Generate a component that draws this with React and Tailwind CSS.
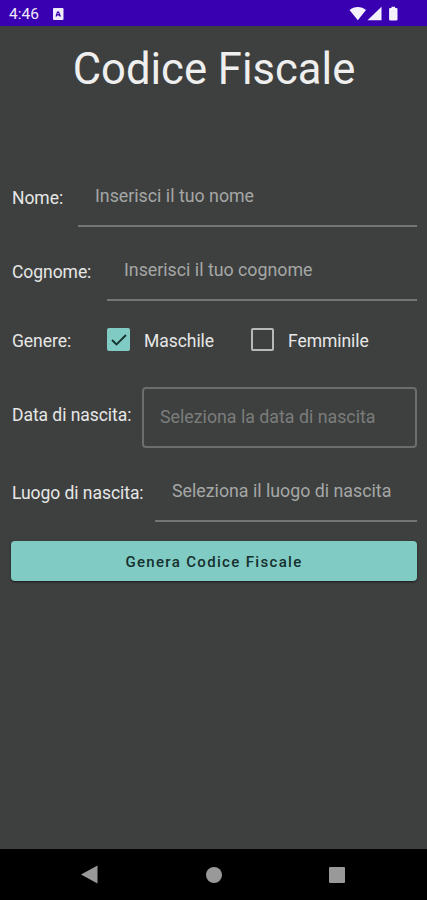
function StatusBar() {
  return (
    <header className="flex h-[26px] items-center bg-[#3900b1] pb-px pl-[9px] pr-[28px] text-[#f0ebfc]">
      <span className="w-[44px] pt-[2px] text-[15.500px] leading-[24px]">4:46</span>
      <svg className="mt-[2px] h-[12px] w-[11px]" viewBox="0 0 11 12">
        <rect width="10.500" height="12" rx="1" fill="#efeafc" />
        <path d="M2.500 8.500 4 3.500h2L8 8.500H6.600L5 7 3.700 8.500Z" fill="#3900b1" />
        <circle cx="5" cy="5.600" r="0.700" fill="#efeafc" />
      </svg>
      <svg className="ml-auto mt-px h-[16px] w-[50px]" viewBox="0 0 50 16" fill="#f5f2fd">
        <path d="M.5 5C5.100.900 12.400.900 17 5L8.800 15.200Z" />
        <path d="M32.500 1.700v13.500H18.500Z" />
        <path d="M41.300 3h1.200V1.700h3.600V3h1.200q1.200 0 1.200 1v10.400q0 1-1.200 1h-6q-1.200 0-1.200-1V4q0-1 1.200-1Z" />
      </svg>
    </header>
  );
}

function Label({ children, className = "" }) {
  return (
    <span
      className={`shrink-0 whitespace-nowrap pl-px text-[17.500px] tracking-[-0.050px] text-[#e6e7e6] ${className}`}
    >
      {children}
    </span>
  );
}

function UnderlinedField({ label, placeholder, labelWidth }) {
  return (
    <div className="flex h-[61px] items-stretch">
      <Label className={`pt-[22px] ${labelWidth}`}>{label}</Label>
      <div className="flex-1 whitespace-nowrap border-b-2 border-[#747675] pl-[17px] pt-[19px] text-[#a5a7a6]">
        {placeholder}
      </div>
    </div>
  );
}

export default function App() {
  return (
    <div className="flex h-[900px] w-[427px] flex-col overflow-hidden bg-[#3e403f] font-['Roboto','Liberation_Sans',sans-serif]">
      <StatusBar />
      <main className="flex flex-1 flex-col pl-[11px] pr-[10px] text-[17.800px] leading-[21px]">
        <h1 className="mt-[17px] text-center text-[43.600px] leading-[54px] text-[#eeefee]">Codice Fiscale</h1>
        <div className="mt-[69px]">
          <UnderlinedField label="Nome:" placeholder="Inserisci il tuo nome" labelWidth="w-[67px]" />
        </div>
        <div className="mt-[13px]">
          <UnderlinedField label="Cognome:" placeholder="Inserisci il tuo cognome" labelWidth="w-[96px]" />
        </div>
        <div className="mt-[14px] flex h-[50px] items-center">
          <Label className="w-[96px] pt-[2px]">Genere:</Label>
          <span className="mb-px flex h-[23px] w-[23px] items-center justify-center rounded-[2px] bg-[#80cbc4]">
            <svg className="h-[22px] w-[22px]" viewBox="0 0 22 22" fill="none" stroke="#173632" strokeWidth="1.900">
              <path d="m4 11 4.500 4.500L18 6" />
            </svg>
          </span>
          <Label className="ml-[13px] w-[108px] pt-[2px]">Maschile</Label>
          <span className="mb-px h-[23px] w-[23px] rounded-[2px] border-2 border-[#b7b9b8]" />
          <Label className="ml-[13px] pt-[2px]">Femminile</Label>
        </div>
        <div className="mt-[22px] flex h-[61px]">
          <Label className="w-[131px] pt-[18px]">Data di nascita:</Label>
          <div className="flex-1 whitespace-nowrap rounded-[4px] border-2 border-[#6c6e6d] pl-[16px] pt-[17px] text-[#7b7d7c]">
            Seleziona la data di nascita
          </div>
        </div>
        <div className="mt-[13px]">
          <UnderlinedField label="Luogo di nascita:" placeholder="Seleziona il luogo di nascita" labelWidth="w-[144px]" />
        </div>
        <button className="mt-[19px] h-[40px] rounded-[4px] bg-[#80cbc4] pt-[2px] text-[15px] font-medium tracking-[1.330px] text-[#16302e] shadow-[0_1px_2px_#1b1b1b]">
          Genera Codice Fiscale
        </button>
      </main>
      <nav className="flex h-[51px] items-center bg-black pl-[81px]">
        <svg className="h-[19px] w-[17px]" viewBox="0 0 17 19" fill="#999">
          <path d="M0 9.500 16.500.5v18Z" />
        </svg>
        <span className="ml-[108px] h-[16px] w-[16px] rounded-full bg-[#999]" />
        <span className="ml-[107px] h-[16px] w-[16px] rounded-[1px] bg-[#999]" />
      </nav>
    </div>
  );
}
